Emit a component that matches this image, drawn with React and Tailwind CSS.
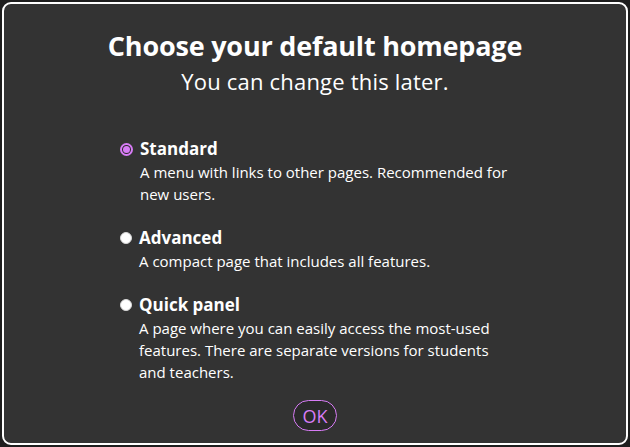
import React, { useState } from "react";

const options = [
  {
    id: "standard",
    title: "Standard",
    lines: ["A menu with links to other pages. Recommended for", "new users."],
  },
  {
    id: "advanced",
    title: "Advanced",
    lines: ["A compact page that includes all features."],
  },
  {
    id: "quick",
    title: "Quick panel",
    lines: [
      "A page where you can easily access the most-used",
      "features. There are separate versions for students",
      "and teachers.",
    ],
  },
];

export default function App() {
  const [choice, setChoice] = useState("standard");

  return (
    <div
      className="w-[630px] h-[447px] bg-[#1e1e1e] p-[2px] text-white"
      style={{ fontFamily: '"Open Sans", "Noto Sans", sans-serif' }}
    >
      <div className="h-full rounded-[9px] border-2 border-white bg-[#333333] flex flex-col items-center pt-[25px]">
        <h1 className="text-[27px] leading-[34px] font-bold tracking-[-0.2px]">
          Choose your default homepage
        </h1>
        <p className="text-[22px] leading-[30px] mt-[3px] tracking-[0.2px]">You can change this later.</p>

        <div className="self-stretch pl-[116px] mt-[41px] flex flex-col gap-[21px]">
          {options.map((o) => (
            <label key={o.id} className="flex items-start gap-[7px] cursor-pointer">
              <input
                type="radio"
                name="home"
                className="hidden"
                checked={choice === o.id}
                onChange={() => setChoice(o.id)}
              />
              {choice === o.id ? (
                <span className="mt-[6px] w-[13px] h-[13px] shrink-0 rounded-full border-2 border-[#d77cf5] bg-[#2a2a2a] flex items-center justify-center">
                  <span className="w-[7px] h-[7px] rounded-full bg-[#d77cf5]" />
                </span>
              ) : (
                <span className="mt-[6px] w-[12px] h-[12px] shrink-0 rounded-full bg-white border border-[#d8d8d8]" />
              )}
              <span className="flex flex-col">
                <span className="text-[17px] leading-[24px] font-bold">{o.title}</span>
                <span className="text-[15px] leading-[22px]">
                  {o.lines.map((l, i) => (
                    <span key={i} className="block whitespace-nowrap">
                      {l}
                    </span>
                  ))}
                </span>
              </span>
            </label>
          ))}
        </div>

        <button className="mt-[17px] h-[31px] w-[44px] rounded-full border border-[#d77cf5] bg-[#2a2a2a] text-[#d77cf5] text-[18px] leading-[20px]">
          OK
        </button>
      </div>
    </div>
  );
}
